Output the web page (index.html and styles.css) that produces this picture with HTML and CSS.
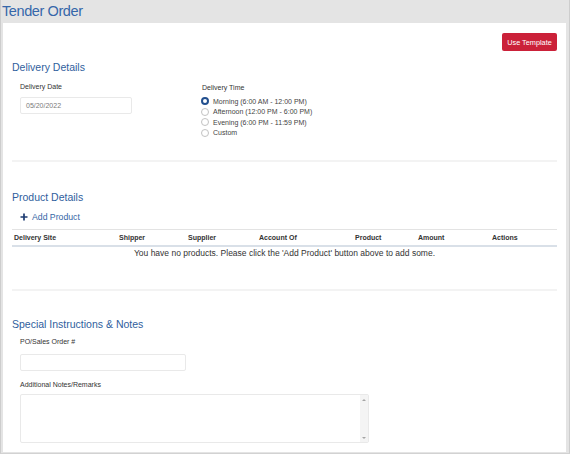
FILE: index.html
```html
<!DOCTYPE html>
<html>
<head>
  <link rel="stylesheet" href="styles.css">
</head>
<body>
  <div class="frame">
    <div class="title-bar">
      <h1>Tender Order</h1>
    </div>

    <div class="panel">
      <div class="toolbar">
        <button class="btn-template">Use Template</button>
      </div>

      <!-- Delivery -->
      <h2 class="section-title first">Delivery Details</h2>
      <div class="delivery-row">
        <div class="field date-field">
          <label>Delivery Date</label>
          <div class="input date-input">05/20/2022</div>
        </div>
        <div class="field time-field">
          <label>Delivery Time</label>
          <div class="radio-list">
            <div class="radio-item"><span class="radio checked"></span>Morning (6:00 AM - 12:00 PM)</div>
            <div class="radio-item"><span class="radio"></span>Afternoon (12:00 PM - 6:00 PM)</div>
            <div class="radio-item"><span class="radio"></span>Evening (6:00 PM - 11:59 PM)</div>
            <div class="radio-item"><span class="radio"></span>Custom</div>
          </div>
        </div>
      </div>

      <div class="divider top-divider"></div>

      <!-- Products -->
      <h2 class="section-title">Product Details</h2>
      <div class="add-product">
        <svg width="8" height="8" viewBox="0 0 8 8"><path d="M4 0.5v7M0.5 4h7" stroke="#1e3c72" stroke-width="1.7" fill="none"/></svg>
        <span>Add Product</span>
      </div>
      <table class="products">
        <colgroup>
          <col style="width:105px"><col style="width:69px"><col style="width:71px"><col style="width:96px"><col style="width:63px"><col style="width:74px"><col style="width:67px">
        </colgroup>
        <thead>
          <tr>
            <th>Delivery Site</th>
            <th>Shipper</th>
            <th>Supplier</th>
            <th>Account Of</th>
            <th>Product</th>
            <th>Amount</th>
            <th>Actions</th>
          </tr>
        </thead>
        <tbody>
          <tr>
            <td colspan="7" class="empty">You have no products. Please click the 'Add Product' button above to add some.</td>
          </tr>
        </tbody>
      </table>

      <div class="divider mid-divider"></div>

      <!-- Notes -->
      <h2 class="section-title notes-title">Special Instructions &amp; Notes</h2>
      <label class="field-label po-label">PO/Sales Order #</label>
      <div class="input po-input"></div>
      <label class="field-label notes-label">Additional Notes/Remarks</label>
      <div class="textarea">
        <div class="textarea-body"></div>
        <div class="scroll">
          <span class="arrow up"></span>
          <span class="arrow down"></span>
        </div>
      </div>
    </div>
  </div>
</body>
</html>
```

FILE: styles.css
```css
body {
  margin: 0;
  font-family: "Liberation Sans", Arial, sans-serif;
  color: #333;
}

.frame {
  width: 570px;
  height: 454px;
  box-sizing: border-box;
  background-color: #e4e4e4;
  border-left: 1px solid #cdcdcd;
  border-right: 1px solid #cdcdcd;
  border-bottom: 1px solid #d2d2d2;
  overflow: hidden;
}

.title-bar {
  height: 23px;
  padding-left: 1px;
}

.title-bar h1 {
  margin: 0;
  font-size: 14.5px;
  line-height: 22px;
  font-weight: normal;
  letter-spacing: -0.4px;
  color: #3667aa;
}

.panel {
  height: 429px;
  margin: 0 3px 0 2px;
  padding: 10px 9px 0 9px;
  box-sizing: border-box;
  background-color: #fff;
}

.toolbar {
  display: flex;
  justify-content: flex-end;
  height: 18px;
}

.btn-template {
  width: 55px;
  height: 18px;
  padding: 0;
  border: none;
  border-radius: 2px;
  background-color: #cb2139;
  color: #fff;
  font-family: "Liberation Sans", Arial, sans-serif;
  font-size: 7.3px;
}

.section-title {
  margin: 28px 0 0 0;
  font-size: 10.5px;
  line-height: 14px;
  font-weight: normal;
  color: #2f5e9d;
}

.section-title.first {
  margin-top: 9px;
}

.section-title.notes-title {
  margin-top: 26px;
}

.delivery-row {
  display: flex;
  margin-top: 8px;
}

.field label,
.field-label {
  display: block;
  font-size: 7px;
  line-height: 10px;
  color: #333;
}

.date-field {
  width: 189px;
  padding-left: 8px;
  box-sizing: border-box;
}

.input {
  height: 17px;
  box-sizing: border-box;
  border: 1px solid #e9e9e9;
  border-radius: 2px;
  background: #fff;
}

.date-input {
  width: 112px;
  margin-top: 5px;
  padding-left: 5px;
  font-size: 7px;
  line-height: 15px;
  color: #7a7a7a;
}

.time-field label {
  margin-top: 1px;
  padding-left: 1px;
}

.radio-list {
  margin-top: 3px;
}

.radio-item {
  display: flex;
  align-items: center;
  height: 10.5px;
  font-size: 7px;
  color: #444;
}

.radio {
  width: 8px;
  height: 8px;
  margin-right: 4px;
  box-sizing: border-box;
  border: 1px solid #c2c2c2;
  border-radius: 50%;
  background: #fff;
}

.radio.checked {
  border: 2.5px solid #23508f;
  background: #fff;
}

.divider {
  height: 2px;
  background-color: #f3f3f3;
}

.top-divider {
  margin-top: 22px;
}

.mid-divider {
  margin-top: 26px;
}

.add-product {
  display: flex;
  align-items: center;
  gap: 4px;
  margin-top: 7px;
  padding-left: 8px;
  height: 12px;
  font-size: 8.7px;
  color: #3566a6;
}

.add-product svg {
  display: block;
}

.products {
  width: 545px;
  margin-top: 6px;
  border-collapse: collapse;
  table-layout: fixed;
}

.products th {
  padding: 3px 2px;
  border-top: 1px solid #e3e3e3;
  border-bottom: 2px solid #d9e0e8;
  text-align: left;
  font-size: 7px;
  line-height: 9px;
  font-weight: bold;
  color: #333;
}

.products td.empty {
  padding: 0 0 4px 0;
  text-align: center;
  font-size: 8.5px;
  line-height: 12px;
  color: #333;
}

.po-label {
  margin-top: 6px;
  padding-left: 8px;
}

.po-input {
  width: 166px;
  margin: 7px 0 0 8px;
}

.notes-label {
  margin-top: 9px;
  padding-left: 8px;
}

.textarea {
  display: flex;
  width: 349px;
  height: 49px;
  margin: 4px 0 0 8px;
  box-sizing: border-box;
  border: 1px solid #e9e9e9;
  border-radius: 2px;
}

.textarea-body {
  flex: 1;
}

.scroll {
  display: flex;
  flex-direction: column;
  justify-content: space-between;
  align-items: center;
  width: 8px;
  padding: 4px 0 3px;
  background-color: #f4f4f4;
}

.arrow {
  width: 0;
  height: 0;
  border-left: 2px solid transparent;
  border-right: 2px solid transparent;
}

.arrow.up {
  border-bottom: 2px solid #a5a5a5;
}

.arrow.down {
  border-top: 2px solid #a5a5a5;
}
```
